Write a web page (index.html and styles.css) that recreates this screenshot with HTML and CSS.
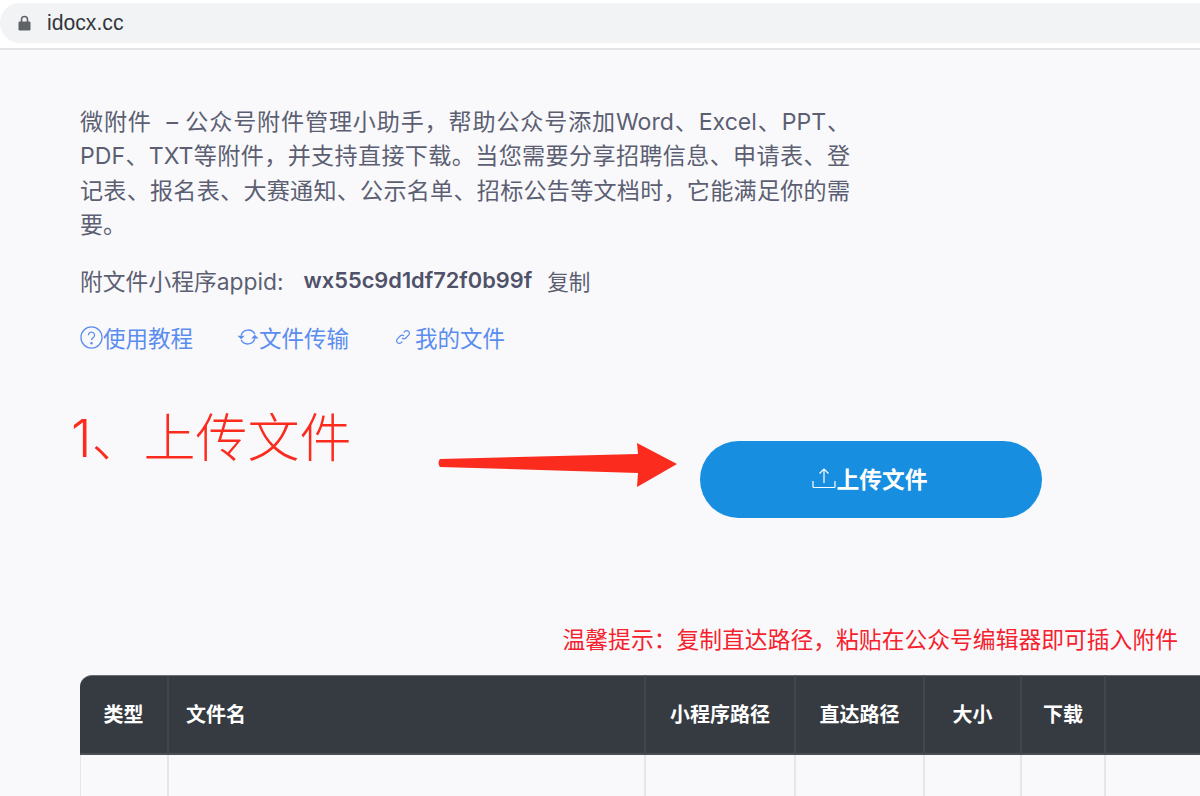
FILE: index.html
```html
<!DOCTYPE html>
<html lang="zh">
<head>
    <meta charset="UTF-8">
    <title>微附件</title>
    <link rel="stylesheet" href="styles.css">
</head>
<body>
    <div class="topbar">
        <div class="address">
            <svg class="lock" viewBox="0 0 13 16" width="13" height="16">
                <path d="M3.5 7V4.5a3 3 0 0 1 6 0V7" fill="none" stroke="#5f6368" stroke-width="1.6"/>
                <rect x="0.5" y="6.5" width="12" height="9" rx="1.2" fill="#5f6368"/>
            </svg>
            <span class="url">idocx.cc</span>
        </div>
    </div>

    <div class="page">
        <p class="intro">微附件 &nbsp;– 公众号附件管理小助手，帮助公众号添加Word、Excel、PPT、PDF、TXT等附件，并支持直接下载。当您需要分享招聘信息、申请表、登记表、报名表、大赛通知、公示名单、招标公告等文档时，它能满足你的需要。</p>

        <div class="appid">
            <span>附文件小程序appid:</span>
            <b class="appid-value">wx55c9d1df72f0b99f</b>
            <span class="appid-copy">复制</span>
        </div>

        <div class="links">
            <a class="link">
                <svg class="icon-help" viewBox="0 0 24 24" width="23" height="23" fill="none" stroke="#5b8def" stroke-width="1.3">
                    <circle cx="12" cy="12" r="11"/>
                    <path d="M8.8 9.6a3.2 3.2 0 1 1 4.9 2.7c-1.1.7-1.7 1.3-1.7 2.6"/>
                    <circle cx="12" cy="18" r=".7" fill="#5b8def"/>
                </svg>使用教程
            </a>
            <a class="link">
                <svg class="icon-sync" viewBox="0 0 24 24" width="22" height="22" fill="none" stroke="#5b8def" stroke-width="1.5">
                    <path d="M4.5 10.5a8 8 0 0 1 15-1.5"/>
                    <path d="M19.5 13.5a8 8 0 0 1-15 1.5"/>
                    <path d="M0.5 10.5h8l-4 4z" fill="#5b8def" stroke="none"/>
                    <path d="M15.5 13.5h8l-4-4z" fill="#5b8def" stroke="none"/>
                </svg>文件传输
            </a>
            <a class="link">
                <svg class="icon-link" viewBox="0 0 24 24" width="16" height="16" fill="none" stroke="#5b8def" stroke-width="1.8">
                    <path d="M10.5 13.5a4 4 0 0 0 5.7 0l4.2-4.2a4 4 0 0 0-5.7-5.7l-1.6 1.6"/>
                    <path d="M13.5 10.5a4 4 0 0 0-5.7 0l-4.2 4.2a4 4 0 0 0 5.7 5.7l1.6-1.6"/>
                </svg>我的文件
            </a>
        </div>

        <div class="upload-row">
            <button class="upload-btn">
                <svg viewBox="0 0 24 24" width="24" height="24" fill="none" stroke="#fff" stroke-width="1.2">
                    <path d="M12 17V3M7.5 7.5 12 3l4.5 4.5"/>
                    <path d="M1 15v5.5a1 1 0 0 0 1 1h20a1 1 0 0 0 1-1V15"/>
                </svg>上传文件
            </button>
        </div>

        <p class="hint">温馨提示：复制直达路径，粘贴在公众号编辑器即可插入附件</p>

        <table class="files">
            <thead>
                <tr>
                    <th class="col-type">类型</th>
                    <th class="col-name">文件名</th>
                    <th class="col-mini">小程序路径</th>
                    <th class="col-direct">直达路径</th>
                    <th class="col-size">大小</th>
                    <th class="col-down">下载</th>
                    <th class="col-rest"></th>
                </tr>
            </thead>
            <tbody>
                <tr>
                    <td></td><td></td><td></td><td></td><td></td><td></td><td></td>
                </tr>
            </tbody>
        </table>
    </div>

    <!-- annotation drawn on top of the screenshot -->
    <div class="note">1、上传文件</div>
    <svg class="note-arrow" viewBox="0 0 242 48" width="242" height="48">
        <path d="M3 18 201 13 200 2 240 23 200 46 201 32 3 26Q0 22 3 18z" fill="#fb2b1d"/>
    </svg>
</body>
</html>
```

FILE: styles.css
```css
* {
    box-sizing: border-box;
}

html, body {
    height: 100%;
}

body {
    margin: 0;
    background-color: #f9f9fc;
    font-family: Inter, "Noto Sans CJK SC", sans-serif;
    color: #5c5f72;
    overflow: hidden;
    position: relative;
}

.topbar {
    height: 50px;
    padding-top: 3px;
    background-color: #ffffff;
    border-bottom: 2px solid #e3e3e6;
}

.address {
    display: flex;
    align-items: center;
    height: 40px;
    padding-left: 18px;
    background-color: #f1f3f4;
    border-radius: 20px 0 0 20px;
}

.lock {
    margin-right: 16px;
}

.url {
    font-family: "Liberation Sans", sans-serif;
    font-size: 21.2px;
    color: #33373d;
}

.page {
    padding: 55px 0 0 80px;
}

.intro {
    width: 770px;
    margin: 0 0 21px;
    font-size: 23.1px;
    line-height: 34.3px;
    text-align: justify;
}

.appid {
    display: flex;
    align-items: center;
    height: 34px;
    font-size: 22.8px;
}

.appid-value {
    margin: 0 15px 0 20px;
    font-size: 21.8px;
    font-weight: 600;
    color: #4f5268;
}

.appid-copy {
    font-size: 21.6px;
}

.links {
    display: flex;
    align-items: center;
    gap: 44px;
    height: 34px;
    margin-top: 23px;
    font-size: 22.5px;
    color: #5b8def;
}

.link {
    display: flex;
    align-items: center;
}

.icon-link {
    margin: 0 4px 0 2px;
}

.upload-row {
    display: flex;
    margin-top: 87px;
    padding-left: 620px;
}

.upload-btn {
    display: flex;
    align-items: center;
    justify-content: center;
    width: 342px;
    height: 77px;
    padding: 0 2px 3px 0;
    border: none;
    border-radius: 39px;
    background-color: #178ee0;
    color: #ffffff;
    font-family: inherit;
    font-size: 22.8px;
    font-weight: 600;
}

.hint {
    margin: 105px 22px 0 0;
    text-align: right;
    font-size: 22.8px;
    line-height: 34px;
    color: #f5222d;
}

.files {
    width: 1300px;
    margin-top: 18px;
    border-collapse: separate;
    border-spacing: 0;
    table-layout: fixed;
}

.files th {
    height: 80px;
    padding-bottom: 3px;
    background-color: #363a41;
    border-right: 2px solid #41454d;
    border-top: 1px solid #6b6f76;
    border-bottom: 2px solid #4b4f57;
    color: #ffffff;
    font-size: 20px;
    font-weight: 700;
    text-align: center;
}

.files th:first-child {
    border-top-left-radius: 12px;
}

.files th.col-name {
    text-align: left;
    padding-left: 17px;
}

.files td {
    height: 60px;
    border-right: 2px solid #e6e6ea;
}

.files td:first-child {
    border-left: 1px solid #e6e6ea;
}

.col-type { width: 89px; }
.col-name { width: 477px; }
.col-mini { width: 150px; }
.col-direct { width: 129px; }
.col-size { width: 97px; }
.col-down { width: 84px; }

.note {
    position: absolute;
    left: 71px;
    top: 405px;
    font-size: 52px;
    font-weight: 300;
    line-height: 68px;
    color: #fb2b1d;
}

.note-arrow {
    position: absolute;
    left: 437px;
    top: 441px;
}
```
